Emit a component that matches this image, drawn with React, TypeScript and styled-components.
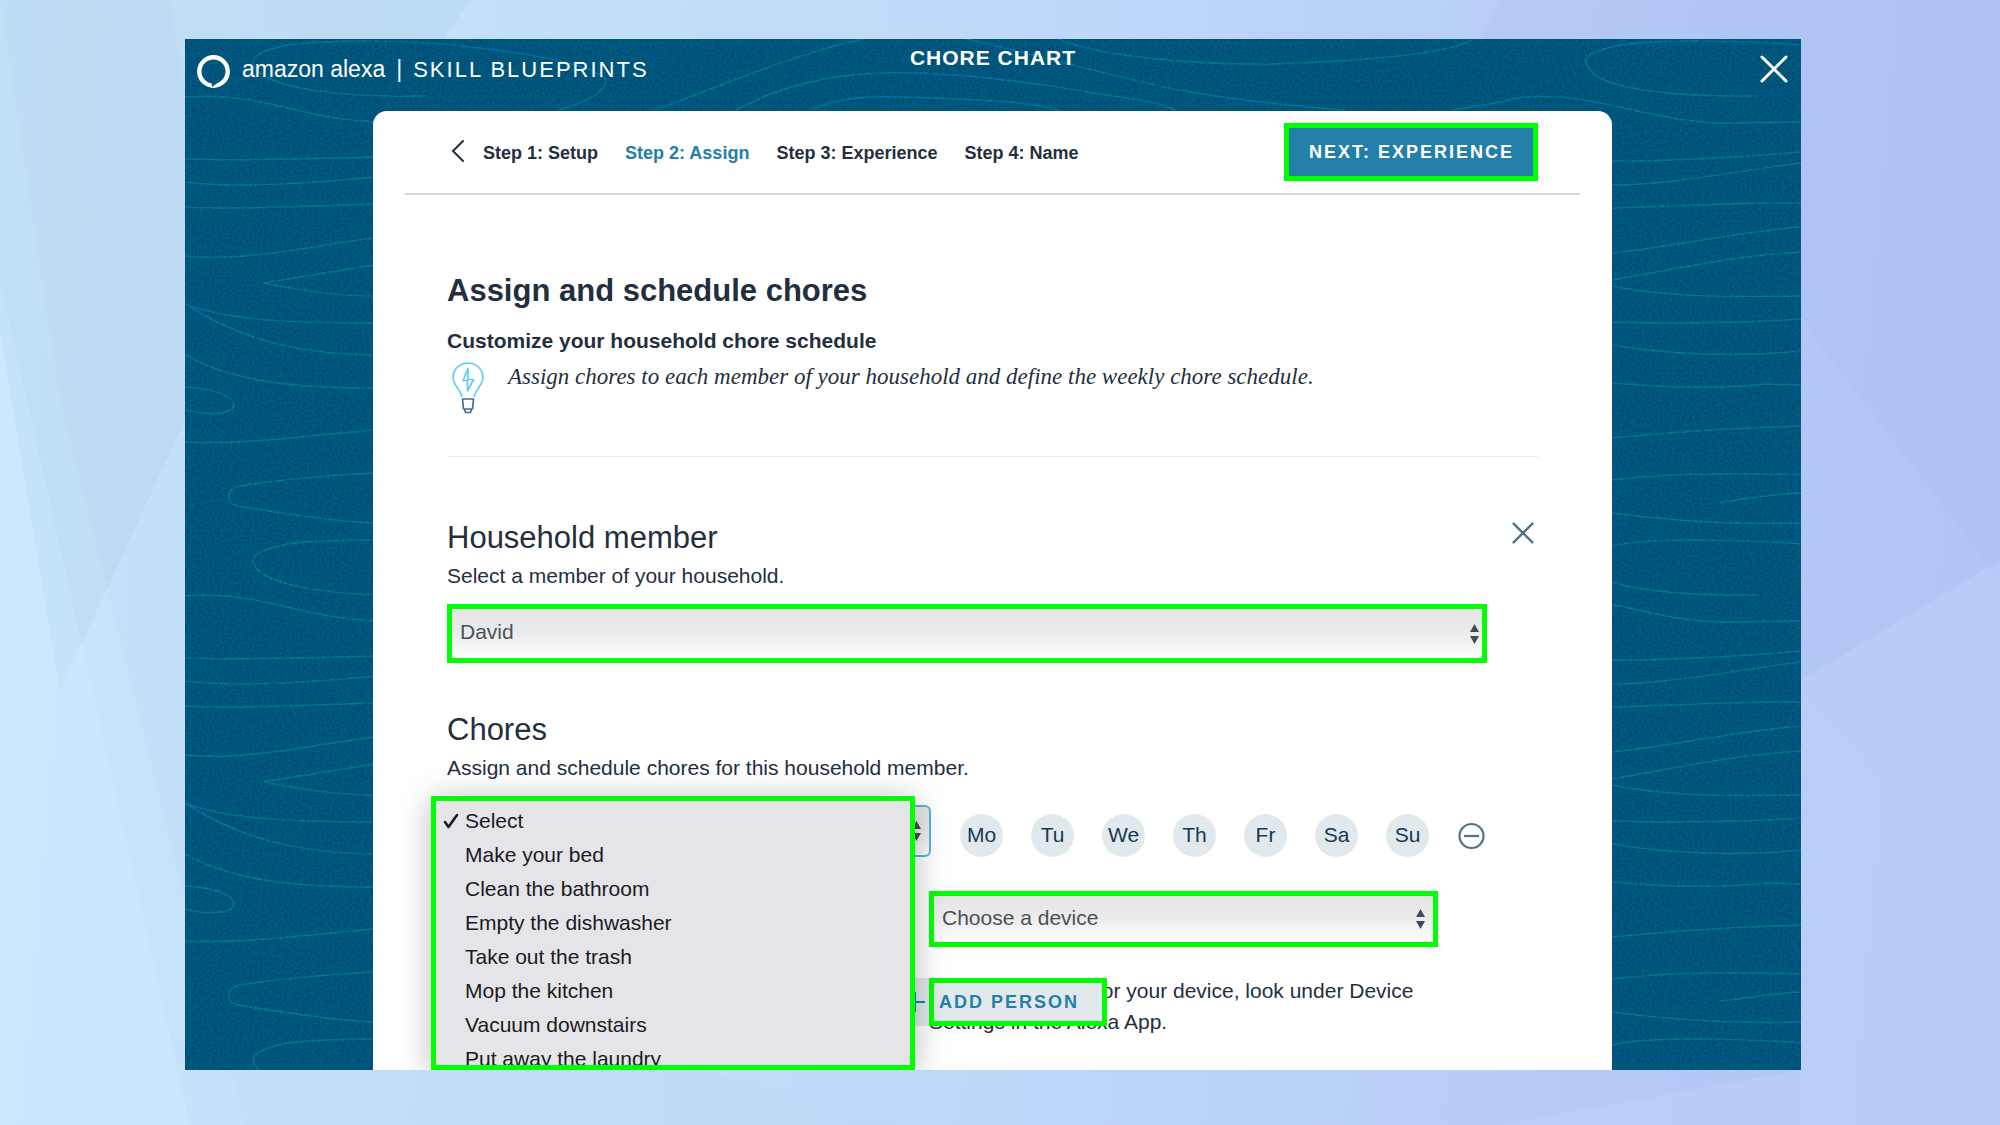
import React, { useState } from "react";
import styled, { createGlobalStyle, css } from "styled-components";

const ink = "#232f3e";
const accent = "#227fa9";
const marker = "#00ff00";
const sans = `"Liberation Sans", Arial, Helvetica, sans-serif`;

const GlobalStyle = createGlobalStyle`
  * { box-sizing: border-box; }
  body { margin: 0; font-family: ${sans}; color: ${ink}; }
  h1, h2, h3, p, ul, ol { margin: 0; padding: 0; font-weight: inherit; }
  ul, ol { list-style: none; }
  button, select { font-family: inherit; margin: 0; cursor: pointer; }
  button { padding: 0; border: 0; background: none; color: inherit; }
`;

const Page = styled.div`
  position: relative;
  display: grid;
  height: 100vh;
  min-height: 700px;
  padding: 39px 199px 55px 185px;
  background: linear-gradient(95deg, #c9e5fb 0%, #c3def8 30%, #bed6f9 55%, #b3c8f4 85%, #b0c5f4 100%);
`;

const Backdrop = styled.svg`
  position: absolute;
  inset: 0;
  width: 100%;
  height: 100%;
`;

const Window = styled.div`
  position: relative;
  display: flex;
  flex-direction: column;
  min-height: 0;
  overflow: hidden;
  background: #00557b;
`;

const TopBar = styled.header`
  position: relative;
  display: grid;
  grid-template-columns: 1fr auto 1fr;
  flex: none;
  height: 72px;
  padding: 0 12px;
  color: #fff;
`;

const Brand = styled.a`
  display: flex;
  align-items: center;
  gap: 12px;
  height: 64px;
  color: #fff;
  text-decoration: none;
  white-space: nowrap;
  font-size: 23px;
  line-height: 28px;
`;

const BrandName = styled.span`
  display: flex;
  align-items: baseline;
  gap: 11px;
  padding-bottom: 4px;
`;

const Product = styled.span`
  font-size: 22px;
  letter-spacing: 2px;
`;

const Title = styled.h1`
  padding-top: 7px;
  font-size: 21px;
  line-height: 24px;
  font-weight: 700;
  letter-spacing: 1px;
`;

const CloseWindow = styled.button`
  display: flex;
  justify-self: end;
  align-self: start;
  padding: 16px 1px 0 0;
`;

const Card = styled.main`
  position: relative;
  flex: 1;
  min-height: 0;
  margin: 0 189px 0 188px;
  background: #fff;
  border-radius: 14px 14px 0 0;
`;

const StepBar = styled.div`
  display: flex;
  align-items: center;
  justify-content: space-between;
  height: 84px;
  margin: 0 32px;
  padding: 0 42px 0 46px;
  border-bottom: 2px solid #d3d8de;
`;

const Steps = styled.nav`
  display: flex;
  align-items: center;
  gap: 19px;
`;

const StepList = styled.ol`
  display: flex;
  gap: 27px;
  padding-top: 2px;
`;

const StepLink = styled.a<{ $current?: boolean }>`
  color: ${(p) => (p.$current ? accent : ink)};
  font-size: 18px;
  line-height: 24px;
  font-weight: 700;
  text-decoration: none;
  white-space: nowrap;
`;

const IconButton = styled.button<{ $top?: number }>`
  display: flex;
  flex: none;
  margin-top: ${(p) => p.$top ?? 0}px;
  color: #50738a;
`;

const actionText = css`
  font-size: 18px;
  line-height: 24px;
  font-weight: 700;
  letter-spacing: 2px;
  white-space: nowrap;
`;

const NextButton = styled.button`
  ${actionText}
  height: 58px;
  padding: 0 19px 0 20px;
  border: 5px solid ${marker};
  background: #237fa9;
  color: #fff;
`;

const Body = styled.div`
  padding: 78px 74px 0 74px;
`;

const PageHeading = styled.h2`
  font-size: 31px;
  line-height: 36px;
  font-weight: 700;
`;

const Intro = styled.section`
  height: 184px;
  border-bottom: 1px solid #e4ecee;
`;

const IntroHeading = styled.h3`
  margin-top: 20px;
  font-size: 21px;
  line-height: 24px;
  font-weight: 700;
`;

const Hint = styled.div`
  display: flex;
  gap: 24px;
  padding: 9px 0 0 5px;
`;

const HintText = styled.p`
  font-family: "Liberation Serif", Georgia, serif;
  font-size: 23px;
  line-height: 30px;
  font-style: italic;
`;

const Section = styled.section<{ $top: number }>`
  padding-right: 51px;
  margin-top: ${(p) => p.$top}px;
`;

const SectionHead = styled.div`
  display: flex;
  justify-content: space-between;
  align-items: flex-start;
  margin-right: -47px;
`;

const SectionTitle = styled.h3`
  font-size: 31px;
  line-height: 36px;
`;

const SectionText = styled.label`
  display: block;
  margin-top: 8px;
  font-size: 21px;
  line-height: 24px;
`;

const SelectBox = styled.div<{ $top?: number; $inset: number }>`
  position: relative;
  display: grid;
  align-items: center;
  margin-top: ${(p) => p.$top ?? 0}px;
  > * { grid-area: 1 / 1; }
  > svg {
    justify-self: end;
    margin-right: ${(p) => p.$inset}px;
    pointer-events: none;
    z-index: 1;
  }
`;

const Select = styled.select<{ $height: number; $focused?: boolean }>`
  appearance: none;
  width: 100%;
  height: ${(p) => p.$height}px;
  padding: 0 32px 4px 8px;
  border: ${(p) => (p.$focused ? "2px solid #56b4e0" : `5px solid ${marker}`)};
  border-radius: ${(p) => (p.$focused ? 6 : 0)}px;
  outline: 0;
  background: linear-gradient(#e5e5e5, #ececec 50%, #fefefe);
  color: #47515a;
  font-size: 21px;
`;

const ChoreRow = styled.div`
  display: grid;
  grid-template-columns: 1fr auto;
  align-items: end;
  gap: 29px;
  margin-top: 25px;
`;

const Schedule = styled.div`
  display: flex;
  align-items: center;
  gap: 29px;
`;

const Days = styled.div`
  display: flex;
  gap: 28px;
`;

const DayButton = styled.button<{ $on: boolean }>`
  width: 43px;
  height: 43px;
  padding-bottom: 2px;
  border-radius: 50%;
  background: ${(p) => (p.$on ? accent : "#e1e9ed")};
  color: ${(p) => (p.$on ? "#fff" : "#153a53")};
  font-size: 21px;
  line-height: 24px;
`;

const Menu = styled.ul`
  position: absolute;
  z-index: 3;
  top: -9px;
  left: -16px;
  width: 484px;
  height: 274px;
  overflow: hidden;
  padding-top: 3px;
  border: 5px solid ${marker};
  background: #e5e4e9;
  box-shadow: 0 4px 30px rgba(0, 0, 0, 0.28);
`;

const MenuItem = styled.li`
  display: grid;
  grid-template-columns: 22px 1fr;
  align-items: center;
  padding-left: 7px;
  height: 34px;
  color: #1b1b1d;
  font-size: 21px;
  line-height: 34px;
  white-space: nowrap;
  cursor: pointer;
  > span { grid-column: 2; }
`;

const DeviceRow = styled.div`
  display: grid;
  grid-template-columns: 509px;
  justify-content: end;
  gap: 28px;
  margin-top: 34px;
  padding-right: 49px;
`;

const DeviceText = styled.p`
  font-size: 21px;
  line-height: 31px;
`;

const AddBar = styled.div`
  position: absolute;
  z-index: 2;
  bottom: 44px;
  left: 0;
  right: 0;
  display: flex;
  justify-content: center;
  pointer-events: none;
`;

const AddButton = styled.button`
  display: flex;
  align-items: center;
  gap: 3px;
  padding-left: 26px;
  background: #e1e9ed;
  color: ${accent};
  pointer-events: auto;
`;

const AddLabel = styled.span`
  ${actionText}
  display: flex;
  align-items: center;
  width: 178px;
  height: 48px;
  padding-left: 5px;
  border: 5px solid ${marker};
`;

const Facets = () => (
  <Backdrop viewBox="0 0 2000 1125" preserveAspectRatio="none" aria-hidden="true">
    <path d="M0 0H470L185 420L60 690L0 330Z" fill="#9dbfdc" opacity=".16" />
    <path d="M0 0H170L185 100V900L60 400Z" fill="#a4c4e0" opacity=".08" />
    <path d="M0 280L190 1125H0Z" fill="#d2eefe" opacity=".3" />
    <path d="M185 880L245 1125H900L700 1070H185Z" fill="#b6d2ee" opacity=".12" />
    <path d="M1500 0H2000V580L1801 320V39H1480Z" fill="#a4b8ec" opacity=".18" />
    <path d="M1801 680L2000 560V1125H1500L1801 1070Z" fill="#c4dcfb" opacity=".3" />
    <path d="M1801 690L2000 900V1125H1801Z" fill="#bcd2fa" opacity=".2" />
  </Backdrop>
);

const leftGrain = [
  "M185 97C215 95 245 98 270 104C310 113 335 120 374 122",
  "M185 159C240 161 310 159 374 157",
  "M185 182C230 188 310 184 374 177",
  "M185 207C240 210 310 206 374 204",
  "M185 256C245 262 310 246 374 238",
  "M374 265L263 283C300 290 335 296 374 296",
  "M185 304C225 319 280 323 374 323",
  "M185 304C240 340 300 354 374 355",
  "M185 355C235 383 300 388 374 388",
  "M185 387C215 389 234 396 234 405C232 416 205 415 185 410",
  "M185 442C250 445 310 435 374 430",
  "M374 473C330 475 270 481 240 486C224 490 226 504 238 506C280 513 330 521 374 523",
];

const rightGrain = [
  "M1612 161C1680 161 1740 157 1801 152",
  "M1612 185C1680 184 1740 170 1801 163",
  "M1612 208C1680 206 1740 202 1801 203",
  "M1612 253C1680 246 1740 231 1801 227",
  "M1612 280C1680 268 1740 255 1801 252",
  "M1612 286C1670 298 1740 297 1801 296",
  "M1612 322C1680 324 1740 323 1801 319",
  "M1612 345C1670 355 1740 357 1801 351",
  "M1612 383C1670 388 1720 389 1766 384L1801 385",
  "M1612 438C1680 431 1740 428 1801 426",
  "M1612 480C1670 473 1740 473 1801 475",
  "M1720 502C1750 499 1770 494 1801 493",
  "M1612 513C1680 522 1740 525 1801 523",
];

const crossGrain = [
  "M863 39C790 55 725 85 654 110",
  "M736 110C800 76 860 71 920 73C990 76 1060 87 1100 94C1140 100 1160 103 1176 110",
  "M811 110C835 98 870 96 900 97C980 100 1030 101 1058 110",
  "M966 39C1030 53 1110 76 1179 90C1240 101 1290 106 1345 110",
  "M1451 110C1480 106 1500 103 1515 98C1540 95 1570 97 1590 101C1640 110 1680 124 1730 123L1801 122",
  "M1058 39C1100 56 1190 65 1273 64C1360 61 1450 55 1473 39",
  "M1801 45C1740 40 1660 40 1630 44C1596 48 1584 56 1586 63C1592 84 1640 97 1758 96",
  "M606 80C606 92 585 103 558 110",
  "M606 80C596 68 560 58 480 48C400 38 330 41 295 44C265 48 252 56 253 63C258 84 320 98 425 96",
];

const WoodGrain = () => (
  <Backdrop viewBox="185 39 1616 1031" preserveAspectRatio="xMidYMin slice" aria-hidden="true">
    <defs>
      <filter id="speckle" x="0" y="0" width="100%" height="100%" colorInterpolationFilters="sRGB">
        <feTurbulence type="fractalNoise" baseFrequency="0.4" numOctaves="3" seed="4" />
        <feColorMatrix values="0 0 0 0 0  0 0 0 0 0.16  0 0 0 0 0.24  2 0 0 0 -0.7" />
      </filter>
      <g id="grain">
        {[...leftGrain, ...rightGrain, ...crossGrain].map((d) => (
          <path key={d} d={d} />
        ))}
      </g>
    </defs>
    <rect x="185" y="39" width="1616" height="1031" fill="#005b84" />
    <g fill="none" stroke="#037aa6" strokeWidth="1.5">
      <use href="#grain" />
      <use href="#grain" y="499" />
      <use href="#grain" y="998" />
    </g>
    <rect x="185" y="39" width="1616" height="1031" filter="url(#speckle)" opacity=".36" />
  </Backdrop>
);

const AlexaRing = () => (
  <svg width="33" height="33" viewBox="0 0 33 33" aria-hidden="true">
    <circle cx="16.500" cy="16.500" r="14.200" fill="none" stroke="#fff" strokeWidth="4.400" />
    <path fill="#00557b" d="M14.500 27L21 27.500L15 32Z" />
  </svg>
);

const Cross = ({ size, width }: { size: number; width: number }) => (
  <svg width={size} height={size} viewBox="0 0 28 28" fill="none" stroke="currentColor" strokeWidth={width} strokeLinecap="round" aria-hidden="true">
    <path d="M2 2L26 26M26 2L2 26" />
  </svg>
);

const Bulb = () => (
  <svg width="32" height="52" viewBox="0 0 32 52" fill="none" strokeWidth="1.7" strokeLinejoin="round" aria-hidden="true">
    <path stroke="#5fcdf5" d="M10 35C9 28 1 23 1 15.500A15 14.500 0 0 1 31 15.500C31 23 23 28 22 35" />
    <path stroke="#5fcdf5" d="M16 6.500L11 18.500H15.500V29L21.500 17.500H16Z" />
    <path stroke="#41708f" d="M10.500 37H21.500L20.500 47H11.500ZM12.500 47L13.500 50.500H18.500L19.500 47" />
  </svg>
);

const Arrows = () => (
  <svg width="9" height="20" viewBox="0 0 9 20" fill="#414b53" aria-hidden="true">
    <path d="M4.500 0L9 8H0ZM4.500 20L9 12H0Z" />
  </svg>
);

const steps = ["Step 1: Setup", "Step 2: Assign", "Step 3: Experience", "Step 4: Name"];
const dayNames = ["Mo", "Tu", "We", "Th", "Fr", "Sa", "Su"];
const chores = [
  "Select",
  "Make your bed",
  "Clean the bathroom",
  "Empty the dishwasher",
  "Take out the trash",
  "Mop the kitchen",
  "Vacuum downstairs",
  "Put away the laundry",
];

export default function App() {
  const [chore, setChore] = useState("Select");
  const [days, setDays] = useState<string[]>([]);
  const toggle = (d: string) =>
    setDays((all) => (all.includes(d) ? all.filter((x) => x !== d) : [...all, d]));

  return (
    <Page>
      <GlobalStyle />
      <Facets />
      <Window>
        <WoodGrain />
        <TopBar>
          <Brand href="#">
            <AlexaRing />
            <BrandName>
              <span>amazon alexa</span>
              <span>|</span>
              <Product>SKILL BLUEPRINTS</Product>
            </BrandName>
          </Brand>
          <Title>CHORE CHART</Title>
          <CloseWindow aria-label="Close">
            <Cross size={28} width={3} />
          </CloseWindow>
        </TopBar>

        <Card>
          <StepBar>
            <Steps aria-label="Steps">
              <IconButton aria-label="Back">
                <svg width="13" height="24" viewBox="0 0 13 24" fill="none" stroke={ink} strokeWidth="2" strokeLinecap="round" aria-hidden="true">
                  <path d="M12 1L2 11L12 21" />
                </svg>
              </IconButton>
              <StepList>
                {steps.map((s, i) => (
                  <li key={s}>
                    <StepLink href="#" $current={i === 1} aria-current={i === 1 ? "step" : undefined}>
                      {s}
                    </StepLink>
                  </li>
                ))}
              </StepList>
            </Steps>
            <NextButton>NEXT: EXPERIENCE</NextButton>
          </StepBar>

          <Body>
            <Intro>
              <PageHeading>Assign and schedule chores</PageHeading>
              <IntroHeading>Customize your household chore schedule</IntroHeading>
              <Hint>
                <Bulb />
                <HintText>
                  Assign chores to each member of your household and define the weekly chore schedule.
                </HintText>
              </Hint>
            </Intro>

            <Section $top={63}>
              <SectionHead>
                <SectionTitle>Household member</SectionTitle>
                <IconButton $top={2} aria-label="Remove member">
                  <Cross size={22} width={3} />
                </IconButton>
              </SectionHead>
              <SectionText htmlFor="member">Select a member of your household.</SectionText>
              <SelectBox $top={16} $inset={8}>
                <Select id="member" $height={59} defaultValue="David">
                  <option>David</option>
                </Select>
                <Arrows />
              </SelectBox>
            </Section>

            <Section $top={49}>
              <SectionTitle>Chores</SectionTitle>
              <SectionText htmlFor="chore">Assign and schedule chores for this household member.</SectionText>
              <ChoreRow>
                <SelectBox $inset={10}>
                  <Select id="chore" $height={52} $focused value={chore} onChange={(e) => setChore(e.target.value)}>
                    {chores.map((c) => (
                      <option key={c}>{c}</option>
                    ))}
                  </Select>
                  <Arrows />
                  <Menu role="listbox" aria-label="Chore">
                    {chores.map((c) => (
                      <MenuItem key={c} role="option" aria-selected={c === chore} onClick={() => setChore(c)}>
                        {c === chore && (
                          <svg width="16" height="18" viewBox="0 0 16 18" fill="none" stroke="#1b1b1d" strokeWidth="2.600" strokeLinecap="round" strokeLinejoin="round" aria-hidden="true">
                            <path d="M2 10L5.500 15L14 3" />
                          </svg>
                        )}
                        <span>{c}</span>
                      </MenuItem>
                    ))}
                  </Menu>
                </SelectBox>
                <Schedule>
                  <Days>
                    {dayNames.map((d) => (
                      <DayButton key={d} $on={days.includes(d)} aria-pressed={days.includes(d)} onClick={() => toggle(d)}>
                        {d}
                      </DayButton>
                    ))}
                  </Days>
                  <IconButton aria-label="Remove chore">
                    <svg width="29" height="29" viewBox="0 0 29 29" fill="none" stroke="currentColor" strokeWidth="2.200" aria-hidden="true">
                      <circle cx="13.500" cy="15" r="12" />
                      <path d="M6 15H21" />
                    </svg>
                  </IconButton>
                </Schedule>
              </ChoreRow>
              <DeviceRow>
                <SelectBox $inset={13}>
                  <Select aria-label="Device" $height={56}>
                    <option>Choose a device</option>
                  </Select>
                  <Arrows />
                </SelectBox>
                <DeviceText>
                  To get the names for your device, look under Device Settings in the Alexa App.
                </DeviceText>
              </DeviceRow>
            </Section>
          </Body>

          <AddBar>
            <AddButton>
              <svg width="22" height="22" viewBox="0 0 22 22" fill="none" stroke={accent} strokeWidth="2" aria-hidden="true">
                <path d="M11 1V21M1 11H21" />
              </svg>
              <AddLabel>ADD PERSON</AddLabel>
            </AddButton>
          </AddBar>
        </Card>
      </Window>
    </Page>
  );
}
